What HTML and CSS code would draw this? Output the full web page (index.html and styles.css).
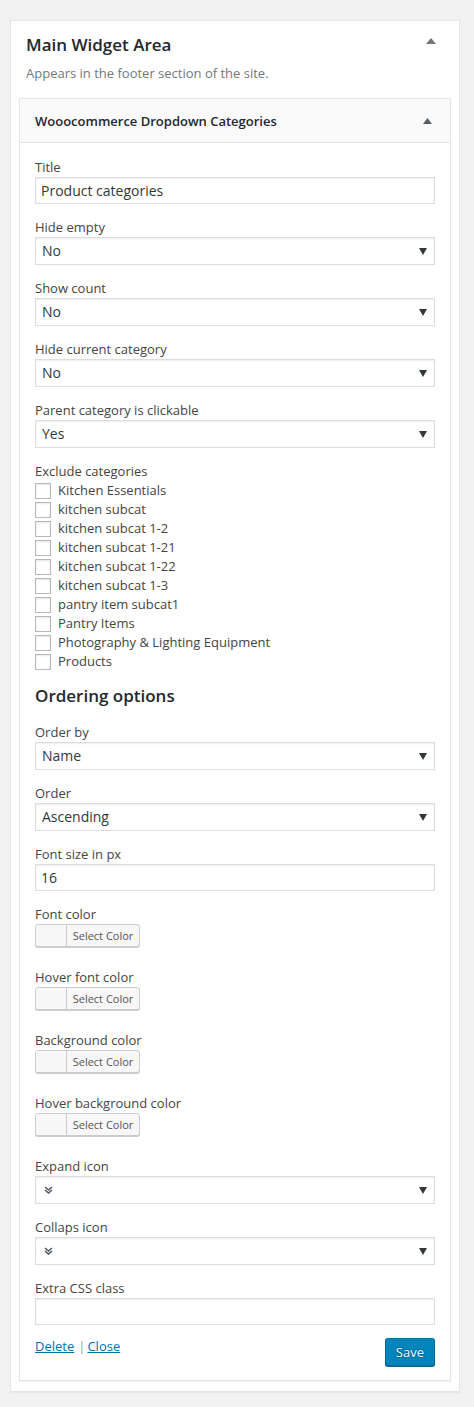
FILE: index.html
```html
<!DOCTYPE html>
<html lang="en">
<head>
<meta charset="utf-8">
<title>Widgets</title>
<link rel="stylesheet" href="styles.css">
</head>
<body>
<div class="sidebar">
  <div class="sidebar-name">
    <h2 class="sidebar-title">Main Widget Area</h2>
    <svg class="toggle toggle-outer" width="10" height="6" viewBox="0 0 10 6"><path d="M5 0 L10 6 L0 6 Z" fill="#72777c"/></svg>
  </div>
  <p class="sidebar-desc">Appears in the footer section of the site.</p>

  <div class="widget">
    <div class="widget-top">
      <h3 class="widget-title">Wooocommerce Dropdown Categories</h3>
      <svg class="toggle" width="9" height="6" viewBox="0 0 9 6"><path d="M4.5 0 L9 6 L0 6 Z" fill="#555d66"/></svg>
    </div>
    <div class="widget-inside">
      <div class="field">
        <label class="label">Title</label>
        <div class="input">Product categories</div>
      </div>
      <div class="field">
        <label class="label">Hide empty</label>
        <div class="select"><span class="value">No</span><svg class="caret" width="8" height="7" viewBox="0 0 8 7"><path d="M0 0 H8 L4 7 Z" fill="#32373c"/></svg></div>
      </div>
      <div class="field">
        <label class="label">Show count</label>
        <div class="select"><span class="value">No</span><svg class="caret" width="8" height="7" viewBox="0 0 8 7"><path d="M0 0 H8 L4 7 Z" fill="#32373c"/></svg></div>
      </div>
      <div class="field">
        <label class="label">Hide current category</label>
        <div class="select"><span class="value">No</span><svg class="caret" width="8" height="7" viewBox="0 0 8 7"><path d="M0 0 H8 L4 7 Z" fill="#32373c"/></svg></div>
      </div>
      <div class="field">
        <label class="label">Parent category is clickable</label>
        <div class="select"><span class="value">Yes</span><svg class="caret" width="8" height="7" viewBox="0 0 8 7"><path d="M0 0 H8 L4 7 Z" fill="#32373c"/></svg></div>
      </div>
      <div class="field field-checks">
        <label class="label">Exclude categories</label>
        <ul class="checklist">
          <li><span class="checkbox"></span>Kitchen Essentials</li>
          <li><span class="checkbox"></span>kitchen subcat</li>
          <li><span class="checkbox"></span>kitchen subcat 1-2</li>
          <li><span class="checkbox"></span>kitchen subcat 1-21</li>
          <li><span class="checkbox"></span>kitchen subcat 1-22</li>
          <li><span class="checkbox"></span>kitchen subcat 1-3</li>
          <li><span class="checkbox"></span>pantry item subcat1</li>
          <li><span class="checkbox"></span>Pantry Items</li>
          <li><span class="checkbox"></span>Photography &amp; Lighting Equipment</li>
          <li><span class="checkbox"></span>Products</li>
        </ul>
      </div>

      <h3 class="section-title">Ordering options</h3>

      <div class="field">
        <label class="label">Order by</label>
        <div class="select"><span class="value">Name</span><svg class="caret" width="8" height="7" viewBox="0 0 8 7"><path d="M0 0 H8 L4 7 Z" fill="#32373c"/></svg></div>
      </div>
      <div class="field">
        <label class="label">Order</label>
        <div class="select"><span class="value">Ascending</span><svg class="caret" width="8" height="7" viewBox="0 0 8 7"><path d="M0 0 H8 L4 7 Z" fill="#32373c"/></svg></div>
      </div>
      <div class="field">
        <label class="label">Font size in px</label>
        <div class="input">16</div>
      </div>
      <div class="field field-color">
        <label class="label">Font color</label>
        <div class="color-btn"><span class="swatch"></span><span class="color-text">Select Color</span></div>
      </div>
      <div class="field field-color">
        <label class="label">Hover font color</label>
        <div class="color-btn"><span class="swatch"></span><span class="color-text">Select Color</span></div>
      </div>
      <div class="field field-color">
        <label class="label">Background color</label>
        <div class="color-btn"><span class="swatch"></span><span class="color-text">Select Color</span></div>
      </div>
      <div class="field field-color">
        <label class="label">Hover background color</label>
        <div class="color-btn"><span class="swatch"></span><span class="color-text">Select Color</span></div>
      </div>
      <div class="field">
        <label class="label">Expand icon</label>
        <div class="select"><svg class="chev" width="9" height="8" viewBox="0 0 9 8"><path d="M1 1 L4.5 4 L8 1 M1 4 L4.5 7 L8 4" fill="none" stroke="#50575e" stroke-width="1.5"/></svg><svg class="caret" width="8" height="7" viewBox="0 0 8 7"><path d="M0 0 H8 L4 7 Z" fill="#32373c"/></svg></div>
      </div>
      <div class="field">
        <label class="label">Collaps icon</label>
        <div class="select"><svg class="chev" width="9" height="8" viewBox="0 0 9 8"><path d="M1 1 L4.5 4 L8 1 M1 4 L4.5 7 L8 4" fill="none" stroke="#50575e" stroke-width="1.5"/></svg><svg class="caret" width="8" height="7" viewBox="0 0 8 7"><path d="M0 0 H8 L4 7 Z" fill="#32373c"/></svg></div>
      </div>
      <div class="field field-last">
        <label class="label">Extra CSS class</label>
        <div class="input"></div>
      </div>

      <div class="widget-control">
        <div class="links"><a href="#" class="link">Delete</a><span class="sep">|</span><a href="#" class="link">Close</a></div>
        <button class="save" type="button">Save</button>
      </div>
    </div>
  </div>
</div>
</body>
</html>
```

FILE: styles.css
```css
html, body {
  margin: 0;
  padding: 0;
}
body {
  background: #f1f1f1;
  font-family: "Open Sans", "Noto Sans", sans-serif;
  font-size: 13px;
  color: #444;
  padding: 20px 14px 15px 10px;
}
.sidebar {
  background: #fff;
  border: 1px solid #e5e5e5;
  box-shadow: 0 1px 1px rgba(0,0,0,.04);
  padding: 0 8px 10px;
}
.sidebar-name {
  display: flex;
  align-items: center;
  justify-content: space-between;
  padding: 12px 15px 0 7px;
}
.sidebar-title {
  margin: 0;
  font-size: 17px;
  line-height: 24px;
  font-weight: 600;
  color: #23282d;
}
.toggle-outer {
  margin-top: -8px;
}
.sidebar-desc {
  margin: 6px 0 15px;
  padding: 0 7px;
  line-height: 20px;
  color: #72777c;
  font-size: 13px;
}
.widget {
  border: 1px solid #e5e5e5;
  box-shadow: 0 1px 1px rgba(0,0,0,.04);
}
.widget-top {
  height: 43px;
  background: #fafafa;
  border-bottom: 1px solid #e5e5e5;
  display: flex;
  align-items: center;
  justify-content: space-between;
  padding: 0 18px 0 15px;
}
.widget-title {
  margin: 0;
  font-size: 13px;
  font-weight: 600;
  color: #23282d;
}
.widget-inside {
  padding: 14px 15px 14px;
}
.field {
  margin-bottom: 13px;
}
.label {
  display: block;
  line-height: 20px;
  color: #444;
}
.input, .select {
  box-sizing: border-box;
  height: 28px;
  border: 1px solid #ddd;
  box-shadow: inset 0 1px 2px rgba(0,0,0,.07);
  background: #fff;
  color: #32373c;
  font-size: 14px;
  line-height: 26px;
  padding: 0 5px;
}
.input {
  height: 27px;
  line-height: 25px;
}
.select {
  display: flex;
  align-items: center;
  justify-content: space-between;
  padding: 0 7px 0 6px;
}
.caret {
  display: block;
  width: 8px;
  height: 7px;
}
.chev {
  display: block;
  margin-left: 2px;
}
.field-checks {
  margin-bottom: 0;
}
.checklist {
  list-style: none;
  margin: 0;
  padding: 0;
}
.checklist li {
  display: flex;
  align-items: center;
  height: 19px;
  line-height: 19px;
  color: #444;
}
.checkbox {
  box-sizing: border-box;
  width: 16px;
  height: 16px;
  border: 1px solid #b4b9be;
  box-shadow: inset 0 1px 2px rgba(0,0,0,.1);
  background: #fff;
  margin-right: 7px;
  flex: none;
}
.section-title {
  margin: 12px 0 13px;
  font-size: 17px;
  line-height: 26px;
  font-weight: 600;
  color: #23282d;
}
.field-color {
  margin-bottom: 20px;
}
.color-btn {
  box-sizing: border-box;
  display: flex;
  width: 105px;
  height: 23px;
  border: 1px solid #ccc;
  border-radius: 3px;
  background: #f7f7f7;
  box-shadow: 0 1px 0 #ccc;
  overflow: hidden;
}
.swatch {
  width: 30px;
  border-right: 1px solid #ccc;
  background: #f7f7f7;
}
.color-text {
  flex: 1;
  text-align: center;
  font-size: 11px;
  line-height: 21px;
  color: #555;
}
.field-last {
  margin-bottom: 13px;
}
.widget-control {
  display: flex;
  justify-content: space-between;
  align-items: flex-start;
}
.links {
  line-height: 17px;
}
.link {
  color: #0073aa;
  text-decoration: underline;
}
.sep {
  color: #a0a5aa;
  margin: 0 2px 0 4px;
}
.save {
  box-sizing: border-box;
  height: 28px;
  padding: 0 10px;
  background: #0085ba;
  border: 1px solid;
  border-color: #0073aa #006799 #006799;
  border-radius: 3px;
  box-shadow: 0 1px 0 #006799;
  color: #fff;
  font-family: "Open Sans", "Noto Sans", sans-serif;
  font-size: 13px;
  line-height: 26px;
  text-shadow: 0 -1px 1px #006799, 1px 0 1px #006799, 0 1px 1px #006799, -1px 0 1px #006799;
}
```
